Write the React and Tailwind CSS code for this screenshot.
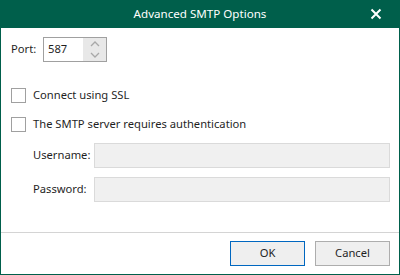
export default function App() {
  return (
    <div
      className="w-[400px] h-[275px] flex flex-col bg-white border border-t-0 border-[#005f4b] text-[11.2px] text-[#1f1f1f]"
      style={{ fontFamily: '"Noto Sans", "Open Sans", sans-serif' }}
    >
      <div className="h-[28px] -mx-px bg-[#005f4b] flex items-center relative text-white">
        <div className="flex-1 text-center text-[11.6px]">Advanced SMTP Options</div>
        <svg className="absolute left-[370px] top-[8px]" width="12" height="12" viewBox="0 0 12 12">
          <path d="M1.5 1.5 L10.5 10.5 M10.5 1.5 L1.5 10.5" stroke="white" strokeWidth="2" />
        </svg>
      </div>
      <div className="flex-1 flex flex-col pl-[10px] pr-[9px]">
        <div className="flex items-center mt-[9px] h-[25px]">
          <span className="w-[32px]">Port:</span>
          <div className="flex w-[64px] h-[25px] border border-[#a0a0a0]">
            <div className="flex-1 pl-[4px] flex items-center">587</div>
            <div className="w-[23px] flex flex-col bg-[#e8e8e8]">
              <div className="flex-1 flex items-center justify-center">
                <svg width="10" height="6" viewBox="0 0 10 6"><path d="M1 5 L5 1 L9 5" stroke="#a8a8a8" strokeWidth="1.3" fill="none" /></svg>
              </div>
              <div className="flex-1 flex items-center justify-center">
                <svg width="10" height="6" viewBox="0 0 10 6"><path d="M1 1 L5 5 L9 1" stroke="#a8a8a8" strokeWidth="1.3" fill="none" /></svg>
              </div>
            </div>
          </div>
        </div>
        <div className="flex items-center mt-[25px] h-[16px]">
          <div className="w-[15px] h-[15px] border border-[#a0a0a0] bg-white mr-[7px]" />
          <span>Connect using SSL</span>
        </div>
        <div className="flex items-center mt-[13px] h-[16px]">
          <div className="w-[15px] h-[15px] border border-[#a0a0a0] bg-white mr-[7px]" />
          <span>The SMTP server requires authentication</span>
        </div>
        <div className="flex items-center mt-[11px] pl-[22px]">
          <span className="w-[61px]">Username:</span>
          <div className="flex-1 h-[25px] bg-[#f0f0f0] border border-[#dadada]" />
        </div>
        <div className="flex items-center mt-[9px] pl-[22px]">
          <span className="w-[61px]">Password:</span>
          <div className="flex-1 h-[25px] bg-[#f0f0f0] border border-[#dadada]" />
        </div>
      </div>
      <div className="h-[42px] border-t border-[#d4d4d4] flex items-start justify-end gap-[10px] pt-[8px] pr-[9px]">
        <button className="w-[75px] h-[25px] bg-[#efefef] border border-[#0067c0] flex items-center justify-center">OK</button>
        <button className="w-[75px] h-[25px] bg-[#efefef] border border-[#adadad] flex items-center justify-center">Cancel</button>
      </div>
    </div>
  );
}
